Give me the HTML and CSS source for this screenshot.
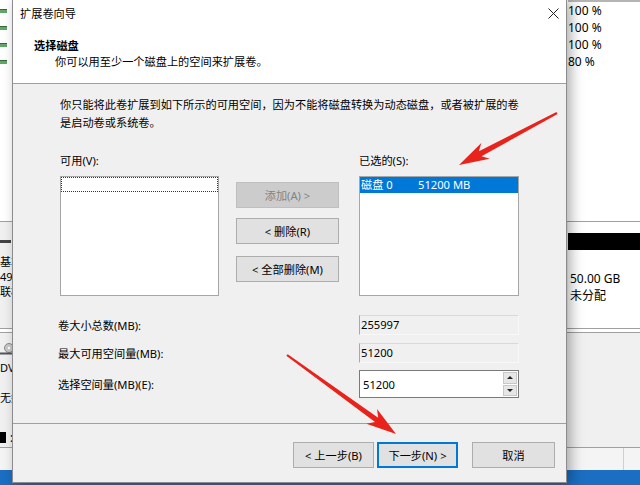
FILE: index.html
```html
<!DOCTYPE html>
<html lang="zh-CN">
<head>
  <meta charset="UTF-8">
  <meta name="viewport" content="width=device-width, initial-scale=1.0">
  <title>扩展卷向导</title>

  <link rel="stylesheet" href="styles.css">

</head>
<body>

  <!-- 뒤에 깔린 디스크 관리 창 -->
  <div class="mgmt">
    <div class="vol-list">
      <div class="vol-head"><span></span><span class="line"></span></div>
      <div class="vol-row"><span class="vol-icon"></span><span>100 %</span></div>
      <div class="vol-row"><span class="vol-icon"></span><span>100 %</span></div>
      <div class="vol-row"><span class="vol-icon"></span><span>100 %</span></div>
      <div class="vol-row"><span class="vol-icon"></span><span>80 %</span></div>
    </div>

    <div class="disk-row disk0">
      <div class="disk-label">
        <span class="disk-icon"></span>
        <div>基本</div>
        <div>49.98 GB</div>
        <div>联机</div>
      </div>
      <div class="part">
        <div class="part-bar"></div>
        <div class="part-text">50.00 GB<br>未分配</div>
      </div>
    </div>

    <div class="disk-gap"></div>

    <div class="disk-row cdrom">
      <div class="disk-label">
        <svg class="cd-icon" width="14" height="12" viewBox="0 0 14 12">
          <circle cx="9" cy="5" r="4.5" fill="#c9c9c9" stroke="#8a8a8a"/>
          <circle cx="9" cy="5" r="1.2" fill="#fff"/>
          <rect x="0" y="9.5" width="14" height="2" fill="#555"/>
        </svg>
        <div>DVD</div>
        <div>&nbsp;</div>
        <div>无媒体</div>
      </div>
      <div class="part gray"></div>
    </div>

    <div class="legend"><span class="swatch"></span><span>:</span></div>
    <div class="status"><span></span><span class="cell"></span><span></span></div>
    <div class="taskbar"></div>
  </div>

  <!-- 확장 볼륨 마법사 대화상자 -->
  <div class="dialog">
    <div class="titlebar">
      <span>扩展卷向导</span>
      <svg class="close" width="11" height="11" viewBox="0 0 11 11">
        <path d="M0.5 0.5 L10.5 10.5 M10.5 0.5 L0.5 10.5" stroke="#222" stroke-width="1" fill="none"/>
      </svg>
    </div>

    <div class="header">
      <div class="head-title">选择磁盘</div>
      <div class="head-sub">你可以用至少一个磁盘上的空间来扩展卷。</div>
    </div>

    <div class="body">
      <div class="desc">你只能将此卷扩展到如下所示的可用空间，因为不能将磁盘转换为动态磁盘，或者被扩展的卷<br>是启动卷或系统卷。</div>

      <div class="lists">
        <div class="col-left">
          <div class="list-label">可用(V):</div>
          <div class="listbox">
            <div class="focus-row"></div>
          </div>
        </div>
        <div class="col-mid">
          <button class="btn disabled">添加(A) &gt;</button>
          <button class="btn">&lt; 删除(R)</button>
          <button class="btn">&lt; 全部删除(M)</button>
        </div>
        <div class="col-right">
          <div class="list-label">已选的(S):</div>
          <div class="listbox">
            <div class="sel-row"><span class="disk-name">磁盘 0</span><span>51200 MB</span></div>
          </div>
        </div>
      </div>

      <div class="fields">
        <div class="field-row">
          <span class="field-label">卷大小总数(MB):</span>
          <span class="readonly">255997</span>
        </div>
        <div class="field-row">
          <span class="field-label">最大可用空间量(MB):</span>
          <span class="readonly">51200</span>
        </div>
        <div class="field-row spin-row">
          <span class="field-label">选择空间量(MB)(E):</span>
          <span class="spin">
            <span class="spin-value">51200</span>
            <span class="spin-btns">
              <span class="spin-up"></span>
              <span class="spin-down"></span>
            </span>
          </span>
        </div>
      </div>
    </div>

    <div class="footer">
      <button class="btn btn-back">&lt; 上一步(B)</button>
      <button class="btn btn-next">下一步(N) &gt;</button>
      <button class="btn btn-cancel">取消</button>
    </div>
  </div>

  <!-- 빨간 화살표 (주석용) -->
  <svg class="arrows" width="640" height="485" viewBox="0 0 640 485">
    <polygon fill="#e8231c" points="557.6,114.0 481.5,156.2 489.7,158.8 459,165 481.3,143.0 478.9,151.3 556.4,112.0"/>
    <polygon fill="#e8231c" points="286.3,355.8 375.0,422.1 366.4,423.7 396,434 377.0,409.1 378.2,417.7 287.7,354.2"/>
  </svg>

</body>
</html>
```

FILE: styles.css
```css
* {
  box-sizing: border-box;
}

html, body {
  margin: 0;
}

body {
  width: 640px;
  height: 485px;
  overflow: hidden;
  position: relative;
  background-color: #fff;
  font-family: "Noto Sans", "Noto Sans CJK SC", sans-serif;
  font-size: 12px;
  color: #000;
}

/* 뒤쪽 창 */
.mgmt {
  display: flex;
  flex-direction: column;
  height: 485px;
}

.vol-list {
  height: 221px;
  background-color: #fff;
}

.vol-head {
  display: grid;
  grid-template-columns: 568px 1fr;
  height: 2px;
}

.vol-head .line {
  background-color: #b4b4b4;
}

.vol-row {
  display: grid;
  grid-template-columns: 568px 1fr;
  align-items: center;
  height: 17px;
  line-height: 17px;
}

.vol-icon {
  width: 7px;
  height: 4px;
  background-color: #63a66a;
  border-top: 1px solid #2f6e36;
}

.disk-row {
  display: grid;
  grid-template-columns: 568px 1fr;
}

.disk0 {
  height: 108px;
  border-top: 1px solid #a0a0a0;
  border-bottom: 1px solid #a0a0a0;
}

/* 글자 박스가 줄 높이를 넘지 않도록 11px */
.disk-label {
  background-color: #f0f0f0;
  line-height: 15px;
  font-size: 11px;
  white-space: nowrap;
}

.disk0 .disk-label {
  padding-top: 18px;
}

.disk-icon {
  display: block;
  width: 11px;
  height: 3px;
  background-color: #444;
  margin-bottom: 11px;
}

.part {
  background-color: #fff;
  padding-top: 11px;
}

.part-bar {
  height: 17px;
  background-color: #000;
}

.part-text {
  margin-top: 20px;
  padding-left: 2px;
  line-height: 17px;
}

.part.gray {
  background-color: #f0f0f0;
}

.disk-gap {
  height: 3px;
  background-color: #fff;
}

.cdrom {
  height: 93px;
  border-top: 1px solid #a0a0a0;
}

.cdrom .disk-label {
  padding-top: 10px;
}

.cd-icon {
  display: block;
  margin-bottom: 5px;
}

.legend {
  height: 22px;
  background-color: #f0f0f0;
  display: flex;
  align-items: flex-start;
  padding-top: 7px;
  line-height: 11px;
  gap: 4px;
}

.swatch {
  width: 6px;
  height: 11px;
  background-color: #000;
}

.status {
  height: 23px;
  border-top: 1px solid #a0a0a0;
  background-color: #f4f4f4;
  display: grid;
  grid-template-columns: 623px 1px 1fr;
}

.status .cell {
  background-color: #d0d0d0;
}

.taskbar {
  flex: 1;
  background-color: #1b6ec2;
}

/* 대화상자 */
.dialog {
  position: absolute;
  left: 12px;
  top: -1px;
  width: 555px;
  height: 484px;
  border: 1px solid #8c8c8c;
  background-color: #f0f0f0;
  display: flex;
  flex-direction: column;
  font-family: "Noto Sans", "Noto Sans CJK SC", sans-serif;
  font-size: 11.2px;
  box-shadow: 4px 2px 12px rgba(0, 0, 0, 0.32);
}

.titlebar {
  height: 26px;
  background-color: #fff;
  display: flex;
  align-items: center;
  justify-content: space-between;
  padding: 0 7px;
}

.header {
  height: 58px;
  background-color: #fff;
  border-bottom: 1px solid #a0a0a0;
  padding: 12px 0 0 21px;
  line-height: 16px;
}

.head-title {
  font-weight: bold;
}

.head-sub {
  margin-left: 21px;
}

.body {
  height: 340px;
  border-bottom: 1px solid #a0a0a0;
  padding: 12px 0 0 47px;
}

.desc {
  line-height: 18px;
  white-space: nowrap;
}

.lists {
  display: flex;
  margin-top: 21px;
}

.col-left {
  width: 159px;
}

.col-mid {
  width: 103px;
  margin-left: 17px;
  padding-top: 29px;
  display: flex;
  flex-direction: column;
  gap: 10px;
}

.col-mid .btn:last-child {
  margin-top: 2px;
}

.col-right {
  width: 160px;
  margin-left: 20px;
}

.list-label {
  line-height: 16px;
  margin-bottom: 7px;
}

.listbox {
  height: 120px;
  background-color: #fff;
  border: 1px solid #a6a6a6;
}

.focus-row {
  height: 15px;
  border: 1px dotted #333;
}

.sel-row {
  height: 16px;
  line-height: 16px;
  background-color: #0078d7;
  color: #fff;
  padding-left: 1px;
  white-space: nowrap;
}

.disk-name {
  display: inline-block;
  width: 57px;
}

.fields {
  margin-top: 19px;
  margin-left: -2px;
}

.field-row {
  display: flex;
  align-items: center;
  height: 20px;
  margin-bottom: 8px;
}

.field-row.spin-row {
  height: 28px;
  margin-top: -1px;
}

.field-label {
  width: 301px;
}

.readonly {
  width: 160px;
  height: 20px;
  line-height: 18px;
  padding-left: 1px;
  border: 1px solid;
  border-color: #dadada #f8f8f8 #f8f8f8 #a8a8a8;
}

.spin {
  width: 160px;
  height: 28px;
  background-color: #fff;
  border: 1px solid #7a7a7a;
  display: flex;
  align-items: center;
  padding-right: 1px;
}

.spin-value {
  flex: 1;
  padding-left: 3px;
}

.spin-btns {
  width: 14px;
  height: 24px;
  display: flex;
  flex-direction: column;
  gap: 1px;
}

.spin-up,
.spin-down {
  flex: 1;
  background-color: #e6e6e6;
  border: 1px solid #c8c8c8;
  display: flex;
  align-items: center;
  justify-content: center;
}

.spin-up::after {
  content: "";
  border-left: 3px solid transparent;
  border-right: 3px solid transparent;
  border-bottom: 3px solid #222;
}

.spin-down::after {
  content: "";
  border-left: 3px solid transparent;
  border-right: 3px solid transparent;
  border-top: 3px solid #222;
}

.footer {
  flex: 1;
  display: flex;
  justify-content: flex-end;
  align-items: flex-start;
  padding: 18px 11px 0 0;
}

.btn {
  height: 26px;
  padding: 0;
  border: 1px solid #adadad;
  background-color: #e1e1e1;
  font-family: inherit;
  font-size: inherit;
  color: #000;
  white-space: nowrap;
}

.btn.disabled {
  background-color: #cccccc;
  border-color: #bfbfbf;
  color: #838383;
}

.btn-back {
  width: 81px;
}

.btn-next {
  width: 81px;
  margin-left: 3px;
  border-color: #0078d7;
  box-shadow: inset 0 0 0 1px #0078d7;
}

.btn-cancel {
  width: 83px;
  margin-left: 14px;
}

.arrows {
  position: absolute;
  left: 0;
  top: 0;
  pointer-events: none;
}
```
